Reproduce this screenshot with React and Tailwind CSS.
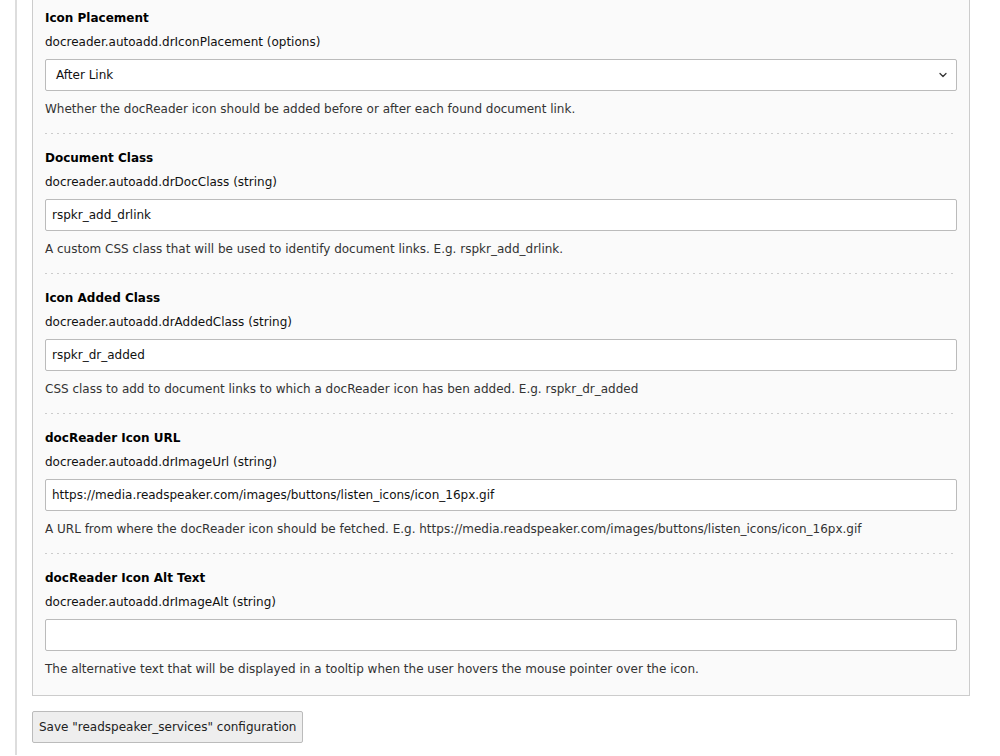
import { ChevronDown } from 'lucide-react';

const sections = [
  {
    title: 'Icon Placement',
    key: 'docreader.autoadd.drIconPlacement (options)',
    type: 'select',
    value: 'After Link',
    help: 'Whether the docReader icon should be added before or after each found document link.',
  },
  {
    title: 'Document Class',
    key: 'docreader.autoadd.drDocClass (string)',
    value: 'rspkr_add_drlink',
    help: 'A custom CSS class that will be used to identify document links. E.g. rspkr_add_drlink.',
  },
  {
    title: 'Icon Added Class',
    key: 'docreader.autoadd.drAddedClass (string)',
    value: 'rspkr_dr_added',
    help: 'CSS class to add to document links to which a docReader icon has ben added. E.g. rspkr_dr_added',
  },
  {
    title: 'docReader Icon URL',
    key: 'docreader.autoadd.drImageUrl (string)',
    value: 'https://media.readspeaker.com/images/buttons/listen_icons/icon_16px.gif',
    help: 'A URL from where the docReader icon should be fetched. E.g. https://media.readspeaker.com/images/buttons/listen_icons/icon_16px.gif',
  },
  {
    title: 'docReader Icon Alt Text',
    key: 'docreader.autoadd.drImageAlt (string)',
    value: '',
    help: 'The alternative text that will be displayed in a tooltip when the user hovers the mouse pointer over the icon.',
  },
];

function Field({ s, last }) {
  return (
    <div>
      <div className="font-bold leading-[18px] text-black">{s.title}</div>
      <div className="mt-1.5 leading-[18px]">{s.key}</div>
      {s.type === 'select' ? (
        <div className="mt-2 h-[32px] bg-white border border-[#bbb] rounded-[2px] flex items-center justify-between pl-[10px] pr-[7px]">
          <span>{s.value}</span>
          <ChevronDown className="w-[12px] h-[12px] text-[#333]" strokeWidth={2.5} />
        </div>
      ) : (
        <div className="mt-2 h-[32px] bg-white border border-[#bbb] rounded-[2px] flex items-center pl-[6px]">
          <span>{s.value}</span>
        </div>
      )}
      <div className="mt-[9px] leading-[18px] text-[#333]">{s.help}</div>
      {!last && (
        <div className="mt-[15px] mb-[15px] h-px bg-[linear-gradient(to_right,#ccc_34%,transparent_0)] bg-[length:6px_1px] bg-repeat-x" />
      )}
    </div>
  );
}

export default function App() {
  return (
    <div className="min-h-screen bg-white pl-[15px] text-[12px] text-[#111] font-['DejaVu_Sans',Verdana,sans-serif] overflow-hidden">
      <div className="min-h-screen border-l-2 border-[#ddd] pl-[15px] pr-[30px]">
        <div className="-mt-px bg-[#fafafa] border border-[#ccc] px-3 pt-[9px] pb-[17px]">
          {sections.map((s, i) => (
            <Field key={s.title} s={s} last={i === sections.length - 1} />
          ))}
        </div>
        <button className="mt-[15px] h-[32px] px-[6px] bg-[#eee] border border-[#bbb] rounded-[2px] text-[12px] text-[#222]">
          Save "readspeaker_services" configuration
        </button>
      </div>
    </div>
  );
}
